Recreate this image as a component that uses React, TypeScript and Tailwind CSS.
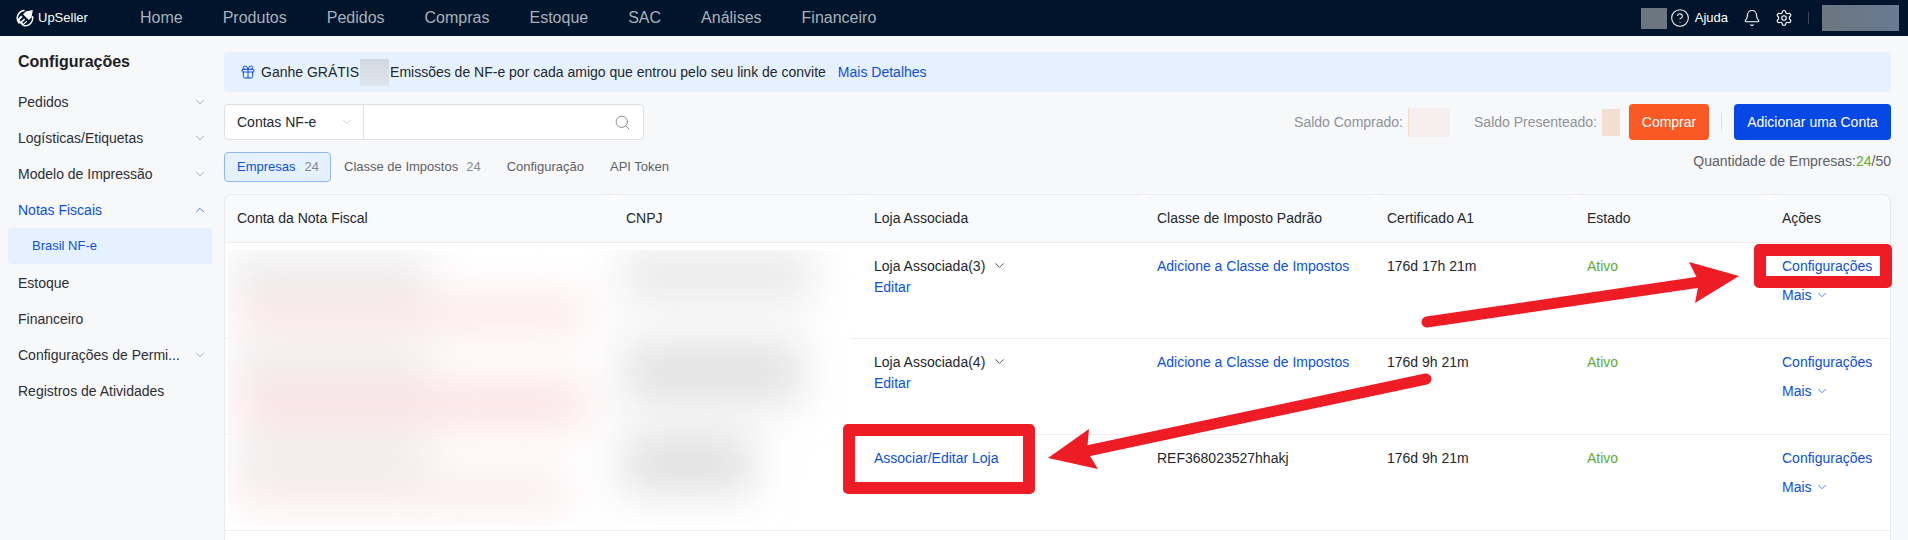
import { Bell, ChevronDown, ChevronUp, CircleHelp, Gift, Search, Settings } from "lucide-react";

const nav = ["Home", "Produtos", "Pedidos", "Compras", "Estoque", "SAC", "Análises", "Financeiro"];

function Logo() {
  return (
    <svg width="18" height="18" viewBox="0 0 18 18" fill="none" className="shrink-0">
      <path d="M3 14A7.8 7.8 0 0 1 8 1.4" stroke="#fff" strokeWidth="1.5" strokeLinecap="round" />
      <path d="M16.6 7.8A7.8 7.8 0 0 1 8 16.8" stroke="#fff" strokeWidth="1.5" strokeLinecap="round" />
      <path d="M16.8 1 15.6 8.2 12.8 11 7 5.2 9.8 2.4Z" fill="#fff" />
      <path d="M5.2 6.6 6.6 8 3.6 11 5 12.4 8 9.4 9.2 10.6 6.2 13.6 7.4 14.8 10.4 11.8 11.2 12.6 6.8 17 1.6 11.8 1.8 10Z" fill="#fff" />
    </svg>
  );
}

function Side({ label, chevron, active }: { label: string; chevron?: "up" | "down"; active?: boolean }) {
  return (
    <div className={`flex h-9 items-center justify-between pl-[18px] pr-[17px] text-[14px] ${active ? "text-[#0b4fe0]" : "text-[#2b2f36]"}`}>
      <span>{label}</span>
      {chevron === "down" && <ChevronDown size={14} strokeWidth={1.25} className="text-[#8a8f98]" />}
      {chevron === "up" && <ChevronUp size={14} strokeWidth={1.25} className="text-[#0b4fe0]" />}
    </div>
  );
}

function Actions() {
  return (
    <td className="px-3 pt-[13px] align-top text-[#0b4fe0]">
      <div className="leading-5">Configurações</div>
      <div className="mt-[9px] flex items-center gap-[3px] leading-5">
        Mais <ChevronDown size={14} strokeWidth={1.25} />
      </div>
    </td>
  );
}

function Row({ store, cert, tax, link }: { store?: string; cert: string; tax?: string; link?: boolean }) {
  return (
    <tr className="h-24 border-t border-[#eceef1]">
      <td />
      <td />
      <td className="px-3 pt-[13px] align-top">
        {link ? (
          <div className="leading-5 text-[#0b4fe0]">Associar/Editar Loja</div>
        ) : (
          <>
            <div className="flex items-center gap-[7px] leading-5">
              {store} <ChevronDown size={15} strokeWidth={1.25} />
            </div>
            <div className="mt-px leading-5 text-[#0b4fe0]">Editar</div>
          </>
        )}
      </td>
      <td className={`px-3 pt-[13px] align-top leading-5 ${tax ? "" : "text-[#0b4fe0]"}`}>{tax ?? "Adicione a Classe de Impostos"}</td>
      <td className="px-3 pt-[13px] align-top leading-5">{cert}</td>
      <td className="px-3 pt-[13px] align-top leading-5 text-[#5aad36]">Ativo</td>
      <Actions />
    </tr>
  );
}

export default function App() {
  return (
    <div className="relative h-[540px] overflow-hidden bg-[#f7f8fa] font-['Liberation_Sans',Arial,sans-serif] text-[14px] text-[#23272e]">
      <header className="flex h-9 items-center bg-[#00152b]">
        <div className="flex w-[140px] items-center gap-1 pl-4 text-[13px] font-medium text-white">
          <Logo />
          UpSeller
        </div>
        <nav className="flex gap-10 text-[16px] text-[#a9b1ba]">
          {nav.map((n) => (
            <span key={n}>{n}</span>
          ))}
        </nav>
        <div className="ml-auto flex items-center pr-[9px] text-white">
          <div className="mr-[3px] h-[21px] w-[26px] bg-[#6c7680]" />
          <CircleHelp size={20} strokeWidth={1.25} />
          <span className="ml-[5px] text-[13px]">Ajuda</span>
          <Bell size={18} strokeWidth={1.5} className="ml-[15px]" />
          <Settings size={18} strokeWidth={1.5} className="ml-[14px]" />
          <div className="ml-[15px] h-3 w-px bg-[#3a4a5c]" />
          <div className="ml-[13px] h-[26px] w-[77px] bg-gradient-to-r from-[#6c7680] to-[#687a92]" />
        </div>
      </header>

      <div className="flex">
        <aside className="w-[224px] shrink-0 pt-[8px]">
          <h2 className="flex h-9 items-center pl-[18px] text-[16px] font-bold text-[#1c2026]">Configurações</h2>
          <div className="mt-[4px]">
            <Side label="Pedidos" chevron="down" />
            <Side label="Logísticas/Etiquetas" chevron="down" />
            <Side label="Modelo de Impressão" chevron="down" />
            <Side label="Notas Fiscais" chevron="up" active />
            <div className="ml-2 mr-3 flex h-9 items-center rounded-[4px] bg-[#e6f1ff] pl-[24px] text-[13px] text-[#0b4fe0]">Brasil NF-e</div>
            <div className="pt-px">
              <Side label="Estoque" />
              <Side label="Financeiro" />
              <Side label="Configurações de Permi..." chevron="down" />
              <Side label="Registros de Atividades" />
            </div>
          </div>
        </aside>

        <main className="w-[1667px] shrink-0 pt-4">
          <div className="flex h-10 items-center rounded-[4px] bg-[#e6f1ff] pl-4">
            <Gift size={16} strokeWidth={1.5} className="text-[#0b4fe0]" />
            <span className="ml-[5px]">Ganhe GRÁTIS</span>
            <span className="mx-px h-[27px] w-[29px] bg-gradient-to-b from-[#d3d7de] to-[#dfe5ee]" />
            <span>Emissões de NF-e por cada amigo que entrou pelo seu link de convite</span>
            <span className="ml-3 text-[#0b4fe0]">Mais Detalhes</span>
          </div>

          <div className="mt-3 flex h-9 items-center">
            <div className="flex h-9 w-[420px] rounded-[4px] border border-[#dcdfe4] bg-white">
              <div className="flex w-[139px] items-center justify-between border-r border-[#dcdfe4] pl-3 pr-[9px]">
                Contas NF-e <ChevronDown size={14} strokeWidth={1} className="text-[#a5a9b0]" />
              </div>
              <div className="flex flex-1 items-center justify-end pr-[12px]">
                <Search size={17} strokeWidth={1.25} className="text-[#7d8188]" />
              </div>
            </div>
            <div className="ml-auto flex items-center text-[#8f939a]">
              <span>Saldo Comprado:</span>
              <span className="ml-[5px] h-[29px] w-px bg-[#f5dcc4]" />
              <span className="h-[29px] w-[41px] bg-[#f5f0ef]" />
              <span className="ml-6">Saldo Presenteado:</span>
              <span className="ml-[5px] h-[27px] w-[18px] bg-gradient-to-r from-[#f3e2cf] to-[#f3ddd5]" />
            </div>
            <button className="ml-[9px] h-9 w-[80px] rounded-[4px] bg-[#f95a25] text-white">Comprar</button>
            <div className="mx-3 h-[18px] w-px bg-[#dcdfe4]" />
            <button className="h-9 w-[157px] rounded-[4px] bg-[#0648e6] text-white">Adicionar uma Conta</button>
          </div>

          <div className="mt-3 flex h-[30px] items-center text-[13px] text-[#5c6068]">
            <div className="flex h-[30px] w-[107px] items-center gap-[9px] rounded-[4px] border border-[#8fb6f5] bg-[#e6f1ff] pl-3 text-[13px]">
              <span className="text-[#0b4fe0]">Empresas</span>
              <span className="text-[#85898f]">24</span>
            </div>
            <div className="ml-[13px] flex gap-2">
              <span>Classe de Impostos</span>
              <span className="text-[#85898f]">24</span>
            </div>
            <span className="ml-[26px]">Configuração</span>
            <span className="ml-[26px]">API Token</span>
            <span className="-mt-[11px] ml-auto text-[14px]">
              Quantidade de Empresas:<span className="text-[#5aad36]">24</span>/50
            </span>
          </div>

          <div className="relative mt-3 rounded-t-[8px] border border-b-0 border-[#e8eaed] bg-white">
            <table className="w-full table-fixed border-collapse text-left">
              <colgroup>
                <col className="w-[389px]" />
                <col className="w-[248px]" />
                <col className="w-[283px]" />
                <col className="w-[230px]" />
                <col className="w-[200px]" />
                <col className="w-[195px]" />
                <col />
              </colgroup>
              <thead>
                <tr className="h-[47px] bg-[#f9fafb] font-normal">
                  {["Conta da Nota Fiscal", "CNPJ", "Loja Associada", "Classe de Imposto Padrão", "Certificado A1", "Estado", "Ações"].map((h) => (
                    <th key={h} className="rounded-t-[8px] px-3 font-normal">
                      {h}
                    </th>
                  ))}
                </tr>
              </thead>
              <tbody>
                <Row store="Loja Associada(3)" cert="176d 17h 21m" />
                <Row store="Loja Associada(4)" cert="176d 9h 21m" />
                <Row link cert="176d 9h 21m" tax="REF368023527hhakj" />
                <tr className="h-24 border-t border-[#eceef1]">
                  <td colSpan={7} />
                </tr>
              </tbody>
            </table>
            {/* redaction blur over the first two columns */}
            <svg className="absolute left-[3px] top-[55px] bg-white" width="622" height="276" viewBox="0 0 622 276">
              <defs>
                <filter id="blurA" x="-30%" y="-60%" width="160%" height="220%">
                  <feGaussianBlur stdDeviation="22" />
                </filter>
              </defs>
              <g filter="url(#blurA)">
                <rect x="0" y="5" width="200" height="42" fill="#ebebeb" />
                <rect x="10" y="45" width="350" height="38" fill="#fce6e8" />
                <rect x="395" y="0" width="190" height="52" fill="#e8e8e8" />
                <rect x="0" y="95" width="200" height="40" fill="#eeeeee" />
                <rect x="10" y="130" width="350" height="48" fill="#fbe2e4" />
                <rect x="395" y="90" width="180" height="64" fill="#e2e2e2" />
                <rect x="0" y="185" width="200" height="38" fill="#eeeeee" />
                <rect x="10" y="222" width="330" height="38" fill="#faeaeb" />
                <rect x="395" y="185" width="130" height="58" fill="#dfdfdf" />
              </g>
            </svg>
          </div>
        </main>
      </div>

      {/* screenshot annotations drawn on top */}
      <div className="absolute left-[1754px] top-[244px] h-[44px] w-[138px] rounded-[5px] border-[12px] border-[#ee1c25]" />
      <div className="absolute left-[843px] top-[424px] h-[70px] w-[192px] rounded-[5px] border-[12px] border-[#ee1c25]" />
      <svg className="pointer-events-none absolute left-0 top-0" width="1908" height="540" viewBox="0 0 1908 540">
        <path d="M1427 322 1700 282" stroke="#ee1c25" strokeWidth="11" strokeLinecap="round" />
        <path d="M1739 276 1689 262 1699 282 1695 303Z" fill="#ee1c25" />
        <path d="M1426 379 1087 451" stroke="#ee1c25" strokeWidth="11" strokeLinecap="round" />
        <path d="M1048 458 1089 429 1087 451 1098 469Z" fill="#ee1c25" />
      </svg>
    </div>
  );
}
